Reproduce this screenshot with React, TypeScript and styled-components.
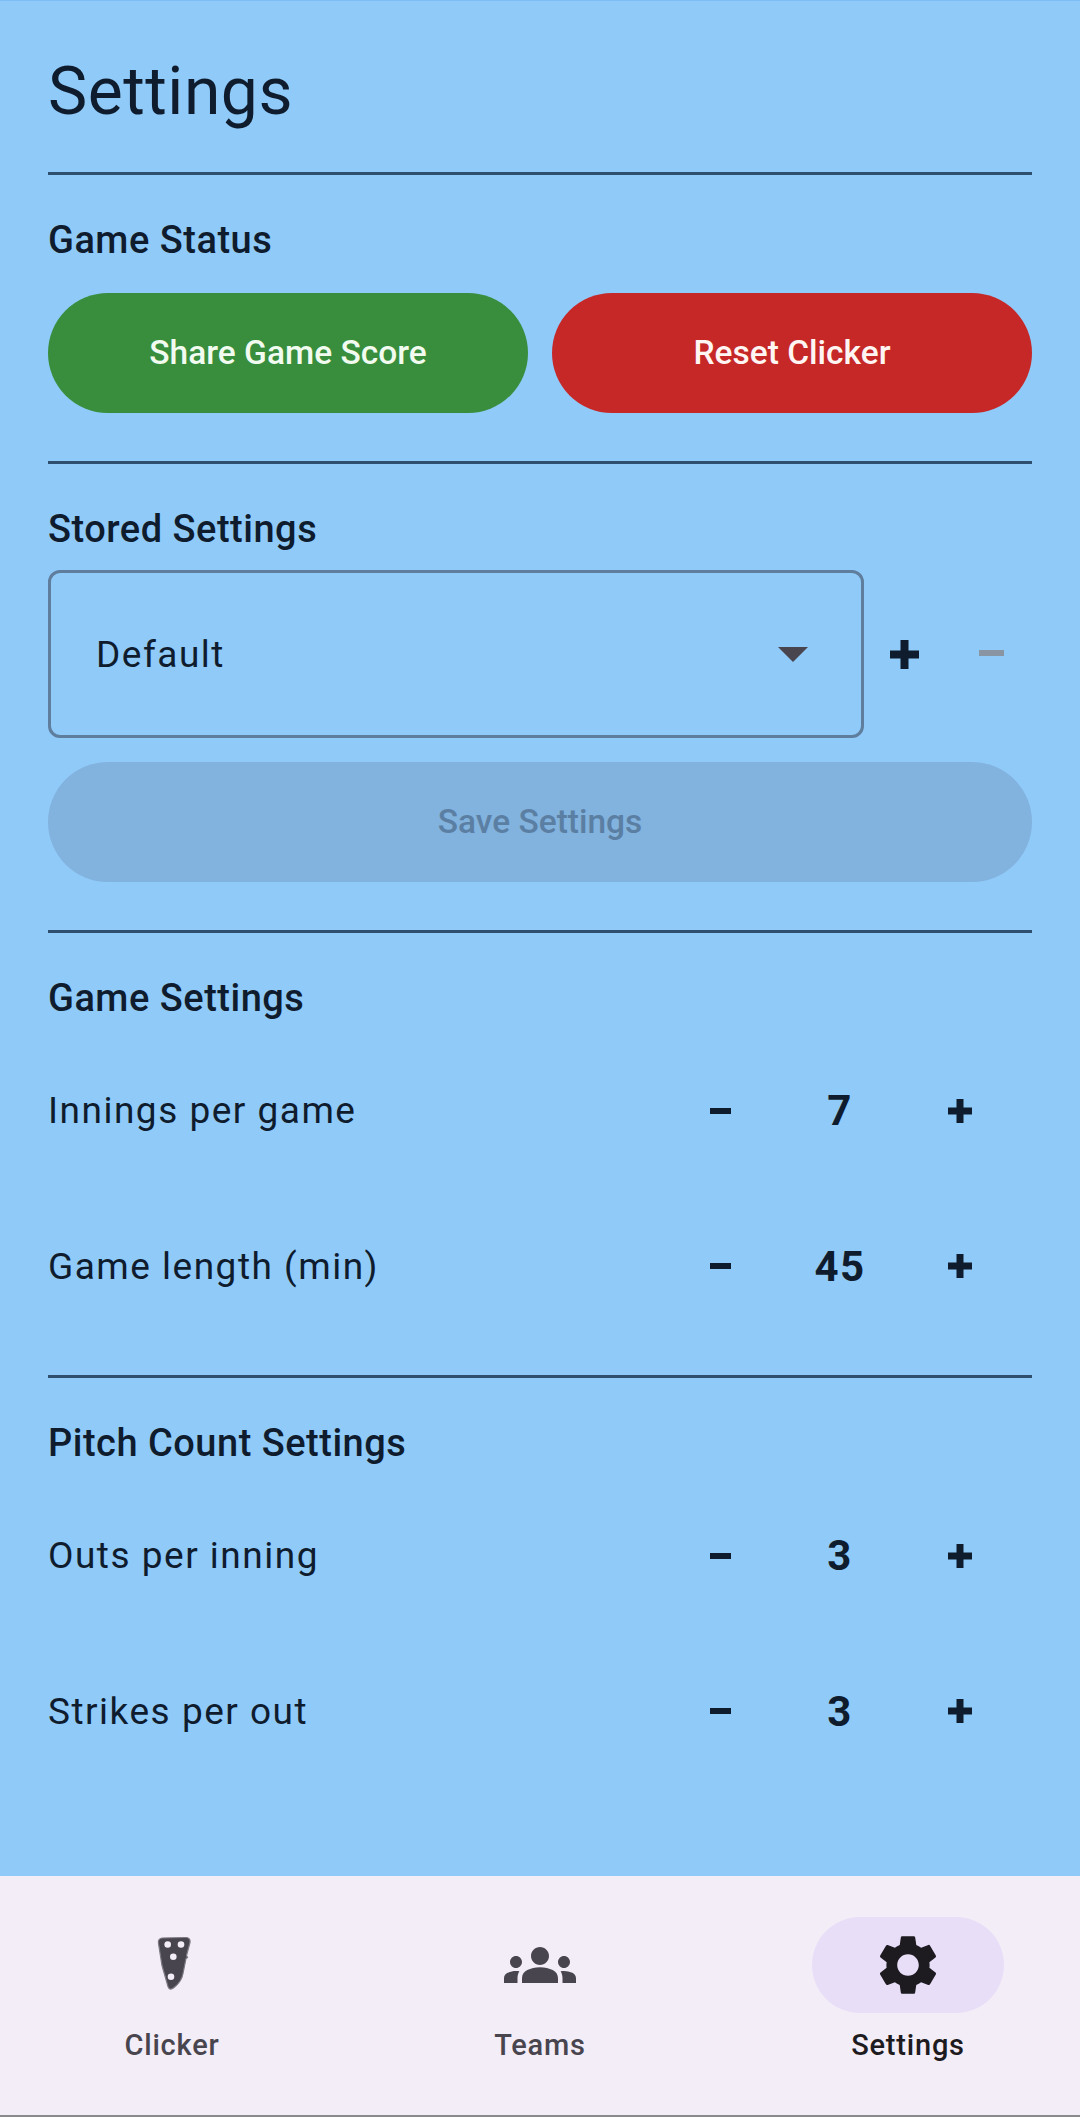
import React from "react";
import styled, { createGlobalStyle } from "styled-components";
import { MdGroups, MdSettings } from "react-icons/md";

const Global = createGlobalStyle`
  html, body { margin: 0; padding: 0; background: #90caf9; }
  * { box-sizing: border-box; }
  body { font-family: Roboto, "Noto Sans", sans-serif; }
`;

const Page = styled.div`
  width: 1080px;
  height: 2117px;
  display: flex;
  flex-direction: column;
  background: #90caf9;
  border-top: 1px solid #7dbdf5;
  color: #0f1c2e;
  overflow: hidden;
`;

const Content = styled.main`
  flex: 1;
  display: flex;
  flex-direction: column;
  padding: 49px 48px 0;
`;

const Title = styled.h1`
  margin: 0 0 38px;
  font-size: 66px;
  line-height: 84px;
  font-weight: 400;
  letter-spacing: 0.5px;
`;

const Divider = styled.hr`
  width: 100%;
  height: 3px;
  margin: 0;
  border: 0;
  background: #2f4f6e;
`;

const Section = styled.section`
  display: flex;
  flex-direction: column;
  padding: 41px 0 48px;
`;

const Heading = styled.h2<{ $gap: number }>`
  margin: 0 0 ${(p) => p.$gap}px;
  font-size: 38px;
  line-height: 48px;
  font-weight: 500;
  letter-spacing: 0.5px;
`;

const ButtonRow = styled.div`
  display: flex;
  gap: 24px;
`;

const Pill = styled.button<{ $bg: string; $fg: string }>`
  flex: 1;
  height: 120px;
  padding: 0 0 2px;
  border: 0;
  border-radius: 60px;
  background: ${(p) => p.$bg};
  color: ${(p) => p.$fg};
  font-family: inherit;
  font-size: 33.5px;
  font-weight: 500;
`;

const SelectRow = styled.div`
  display: flex;
  align-items: center;
  margin-bottom: 24px;
`;

const Select = styled.div`
  flex: 0 0 816px;
  height: 168px;
  display: flex;
  align-items: center;
  justify-content: space-between;
  padding: 0 53px 0 45px;
  border: 3px solid #5f7d9c;
  border-radius: 12px;
  font-size: 37px;
  letter-spacing: 1.5px;
`;

const Caret = styled.span`
  width: 0;
  height: 0;
  border-left: 15px solid transparent;
  border-right: 15px solid transparent;
  border-top: 15px solid #49454f;
`;

const SelectActions = styled.div`
  display: flex;
  align-items: center;
  gap: 60px;
  padding-left: 26px;
`;

const PlusAction = styled.span`
  display: flex;
  color: #0f1c2e;
`;

const MinusAction = styled.span`
  display: flex;
  margin-bottom: 3px;
  color: #8995a3;
`;

const SettingRow = styled.div`
  height: 155.5px;
  display: flex;
  align-items: center;
`;

const Label = styled.span`
  flex: 1;
  font-size: 37px;
  letter-spacing: 1.5px;
`;

const Stepper = styled.div`
  display: grid;
  grid-template-columns: repeat(3, 120px);
  align-items: center;
  justify-items: center;
  margin-right: 12px;
`;

const Value = styled.span`
  font-size: 42px;
  font-weight: 700;
  letter-spacing: 1.4px;
`;

const RowsSection = styled(Section)`
  padding-bottom: 31px;
`;

const Nav = styled.nav`
  height: 241px;
  display: flex;
  justify-content: space-between;
  padding: 41px 76px 0;
  background: #f3edf7;
  border-bottom: 2px solid #8a8a8e;
`;

const NavItem = styled.div<{ $active?: boolean }>`
  width: 192px;
  display: flex;
  flex-direction: column;
  align-items: center;
  color: ${(p) => (p.$active ? "#1d1b20" : "#49454f")};
`;

const NavIcon = styled.div<{ $active?: boolean }>`
  width: 192px;
  height: 96px;
  display: flex;
  align-items: center;
  justify-content: center;
  border-radius: 48px;
  background: ${(p) => (p.$active ? "#e8def8" : "transparent")};
`;

const NavLabel = styled.span`
  margin-top: 12px;
  font-size: 29px;
  line-height: 40px;
  font-weight: 500;
  letter-spacing: 0.8px;
`;

const PlusIcon = ({ size, stroke }: { size: number; stroke: number }) => (
  <svg width={size} height={size} viewBox={`0 0 ${size} ${size}`} fill="currentColor">
    <rect x={(size - stroke) / 2} y={0} width={stroke} height={size} />
    <rect x={0} y={(size - stroke) / 2} width={size} height={stroke} />
  </svg>
);

const MinusIcon = ({ size, stroke }: { size: number; stroke: number }) => (
  <svg width={size} height={stroke} viewBox={`0 0 ${size} ${stroke}`} fill="currentColor">
    <rect width={size} height={stroke} />
  </svg>
);

const ClickerIcon = () => (
  <svg width="72" height="72" viewBox="0 1.500 72 72">
    <path
      d="M26 10.500L50 10C53 10 54.500 12 54 15L50.500 28L51.500 30L50 31L47 46C46 52 42 57 38 60C35 62.500 33 62 32 59L26 38L22.500 16C22 13 23 11 26 10.500Z"
      fill="#49454f"
      stroke="#7d7983"
      strokeWidth="1.2"
    />
    <circle cx="31.700" cy="17" r="3.300" fill="#f3edf7" />
    <circle cx="45" cy="17" r="3.300" fill="#f3edf7" />
    <circle cx="37.300" cy="29.300" r="3.300" fill="#f3edf7" />
    <circle cx="35" cy="49.300" r="3.300" fill="#f3edf7" />
  </svg>
);

const Row = ({ label, value }: { label: string; value: string }) => (
  <SettingRow>
    <Label>{label}</Label>
    <Stepper>
      <MinusIcon size={21} stroke={6} />
      <Value>{value}</Value>
      <PlusIcon size={24} stroke={7} />
    </Stepper>
  </SettingRow>
);

export default function App() {
  return (
    <Page>
      <Global />
      <Content>
        <Title>Settings</Title>
        <Divider />
        <Section>
          <Heading $gap={29}>Game Status</Heading>
          <ButtonRow>
            <Pill $bg="#388e3c" $fg="#f1fbef">Share Game Score</Pill>
            <Pill $bg="#c62828" $fg="#fff5f3">Reset Clicker</Pill>
          </ButtonRow>
        </Section>
        <Divider />
        <Section>
          <Heading $gap={17}>Stored Settings</Heading>
          <SelectRow>
            <Select>
              Default
              <Caret />
            </Select>
            <SelectActions>
              <PlusAction><PlusIcon size={29} stroke={8} /></PlusAction>
              <MinusAction><MinusIcon size={25} stroke={6} /></MinusAction>
            </SelectActions>
          </SelectRow>
          <ButtonRow>
            <Pill $bg="#82b2de" $fg="#5b7fa3">Save Settings</Pill>
          </ButtonRow>
        </Section>
        <Divider />
        <RowsSection>
          <Heading $gap={11}>Game Settings</Heading>
          <Row label="Innings per game" value="7" />
          <Row label="Game length (min)" value="45" />
        </RowsSection>
        <Divider />
        <RowsSection>
          <Heading $gap={11}>Pitch Count Settings</Heading>
          <Row label="Outs per inning" value="3" />
          <Row label="Strikes per out" value="3" />
        </RowsSection>
      </Content>
      <Nav>
        <NavItem>
          <NavIcon><ClickerIcon /></NavIcon>
          <NavLabel>Clicker</NavLabel>
        </NavItem>
        <NavItem>
          <NavIcon><MdGroups size={72} /></NavIcon>
          <NavLabel>Teams</NavLabel>
        </NavItem>
        <NavItem $active>
          <NavIcon $active><MdSettings size={72} /></NavIcon>
          <NavLabel>Settings</NavLabel>
        </NavItem>
      </Nav>
    </Page>
  );
}
